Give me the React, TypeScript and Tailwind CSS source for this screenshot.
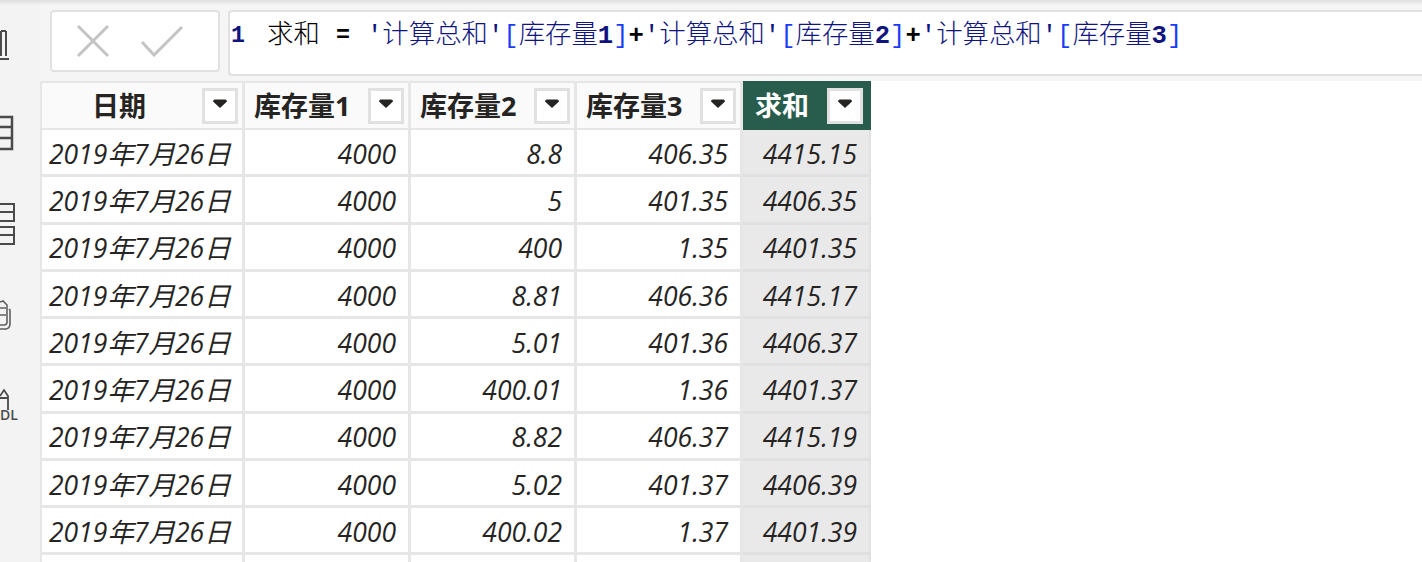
const rows = [
  ["4000", "8.8", "406.35", "4415.15"],
  ["4000", "5", "401.35", "4406.35"],
  ["4000", "400", "1.35", "4401.35"],
  ["4000", "8.81", "406.36", "4415.17"],
  ["4000", "5.01", "401.36", "4406.37"],
  ["4000", "400.01", "1.36", "4401.37"],
  ["4000", "8.82", "406.37", "4415.19"],
  ["4000", "5.02", "401.37", "4406.39"],
  ["4000", "400.02", "1.37", "4401.39"],
  ["", "", "", ""],
];

const font = "font-['Open_Sans','Noto_Sans_CJK_SC',sans-serif]";

function FilterButton() {
  return (
    <div className="flex h-[36px] w-[36px] shrink-0 items-start justify-center border-[3px] border-[#e1e1e1] bg-white pt-[8px]">
      <svg width="14" height="9" viewBox="0 0 14 9">
        <path d="M2 0.5h10q2 0 2 2L7 9 0 2.5q0-2 2-2z" fill="#252423" />
      </svg>
    </div>
  );
}

function HeaderCell({ title, w, pl }: { title: string; w: string; pl: string }) {
  return (
    <div className={`${w} ${pl} flex h-[49px] shrink-0 items-center border-t-[2px] border-r-[3px] border-b-[2px] border-[#e6e6e6] bg-[#fafafa] pr-[4px]`}>
      <span className="flex-1 pt-[1px] text-[27px] font-bold leading-[36px] text-[#252423]">{title}</span>
      <FilterButton />
    </div>
  );
}

function Cell({ w, children }: { w: string; children?: React.ReactNode }) {
  return (
    <div className={`${w} flex h-[47.25px] shrink-0 items-center justify-end border-r-[3px] border-b-[3px] border-[#e6e6e6] pt-[5px] pr-[12px]`}>
      {children}
    </div>
  );
}

function RailIcons() {
  return (
    <div className="flex h-full w-[40px] shrink-0 flex-col bg-[#f3f3f3] pt-[30px]">
      <svg width="12" height="30" viewBox="0 0 12 30" fill="none" stroke="#4a4a4a" strokeWidth="2">
        <path d="M1 1v25M6 1v25M1 1h5M0 29h9" />
      </svg>
      <svg className="mt-[55px]" width="14" height="36" viewBox="0 0 14 36" fill="none" stroke="#4a4a4a" strokeWidth="2.5">
        <path d="M0 2h12v32H0M0 12h12M0 23h12" />
      </svg>
      <svg className="mt-[52px]" width="16" height="42" viewBox="0 0 16 42" fill="none" stroke="#4a4a4a" strokeWidth="2">
        <path d="M0 1h14v17H0M0 9h14M0 24h14v17H0M0 32h14" />
      </svg>
      <svg className="mt-[55px]" width="12" height="32" viewBox="0 0 12 32" fill="none" stroke="#606060" strokeWidth="1.6">
        <path d="M0 2l3-1 4 4v17q0 3-3 3H0M0 8h6M0 15h6M9 9l1 1v14q0 4-4 5H0" />
      </svg>
      <div className="mt-[56px] flex flex-col">
        <svg width="10" height="22" viewBox="0 0 10 22" fill="none" stroke="#4a4a4a" strokeWidth="1.8">
          <path d="M0 8l4-6 4 6v14M0 10h8" />
        </svg>
        <span className="-mt-[1px] font-['Open_Sans',sans-serif] text-[14px] font-semibold leading-[12px] text-[#4a4a4a]">DL</span>
      </div>
    </div>
  );
}

function Code({ children }: { children: string }) {
  return <span className="text-[26.4px] font-light text-[#10147e]">{children}</span>;
}

function Bracket({ children }: { children: string }) {
  return <span className="text-[#1a3cff]">{children}</span>;
}

function ColumnRef({ n, plus }: { n: number; plus?: boolean }) {
  return (
    <>
      '<Code>计算总和</Code>'
      <Bracket>[</Bracket>
      <Code>库存量</Code>
      <span className="font-semibold">{n}</span>
      <Bracket>]</Bracket>
      {plus && <span className="font-bold text-black">+</span>}
    </>
  );
}

export default function App() {
  return (
    <div className={`${font} relative flex h-[562px] w-[1422px] overflow-hidden bg-white`}>
      <div className="absolute inset-x-0 top-0 h-[5px] bg-gradient-to-b from-[#dedede] to-[#dedede00]" />
      <RailIcons />
      <div className="flex min-w-0 flex-1 flex-col">
        <div className="h-[81px] shrink-0 bg-[#f5f5f5] pl-[10px] pt-[10px]">
          <div className="flex items-start gap-[8px]">
            <div className="flex h-[62px] w-[170px] items-center gap-[30px] rounded-[4px] border-[2px] border-[#e1e1e1] bg-white pl-[24px]">
              <svg width="34" height="34" viewBox="0 0 34 34" stroke="#c4c4c4" strokeWidth="3" fill="none">
                <path d="M2 2l30 30M32 2L2 32" />
              </svg>
              <svg width="44" height="32" viewBox="0 0 44 32" stroke="#c4c4c4" strokeWidth="3" fill="none">
                <path d="M2 17l12 13L42 2" />
              </svg>
            </div>
            <div className="flex h-[66px] flex-1 rounded-l-[4px] border-y-[2px] border-l-[2px] border-[#e1e1e1] bg-white pl-[1px] pt-[8px] font-['Liberation_Mono','Noto_Sans_CJK_SC',monospace] text-[25.6px] leading-[32px] text-[#10147e]">
              <span className="w-[36px] text-[23.3px] font-semibold">1</span>
              <span className="w-[69px] text-[26.4px] font-light text-black">求和</span>
              <span className="w-[31px] text-[23.3px] font-bold text-black">=</span>
              <span className="whitespace-nowrap">
                <ColumnRef n={1} plus />
                <ColumnRef n={2} plus />
                <ColumnRef n={3} />
              </span>
            </div>
          </div>
        </div>
        <div className="flex w-[831px] flex-col border-l-[2px] border-[#e6e6e6]">
          <div className="flex">
            <HeaderCell title="日期" w="w-[203px]" pl="pl-[50px]" />
            <HeaderCell title="库存量1" w="w-[166px]" pl="pl-[9px]" />
            <HeaderCell title="库存量2" w="w-[166px]" pl="pl-[9px]" />
            <HeaderCell title="库存量3" w="w-[166px]" pl="pl-[9px]" />
            <div className="flex h-[49px] w-[128px] shrink-0 items-center bg-[#285c4d] pl-[12px] pr-[8px]">
              <span className="flex-1 pt-[1px] text-[27px] font-bold leading-[36px] text-white">求和</span>
              <FilterButton />
            </div>
          </div>
          {rows.map((r, i) => (
            <div key={i} className="flex text-[26.5px] italic text-[#252423]">
              <div className="flex h-[47.25px] w-[203px] shrink-0 items-center border-r-[3px] border-b-[3px] border-[#e6e6e6] pl-[7px] pt-[5px]">
                {r[0] ? "2019年7月26日" : ""}
              </div>
              <Cell w="w-[166px]">{r[0]}</Cell>
              <Cell w="w-[166px]">{r[1]}</Cell>
              <Cell w="w-[166px]">{r[2]}</Cell>
              <div className="flex h-[47.25px] w-[128px] shrink-0 items-center justify-end border-r-[2px] border-b-[3px] border-[#e0e0e0] bg-[#e9e9e9] pt-[5px] pr-[12px]">{r[3]}</div>
            </div>
          ))}
        </div>
      </div>
    </div>
  );
}
